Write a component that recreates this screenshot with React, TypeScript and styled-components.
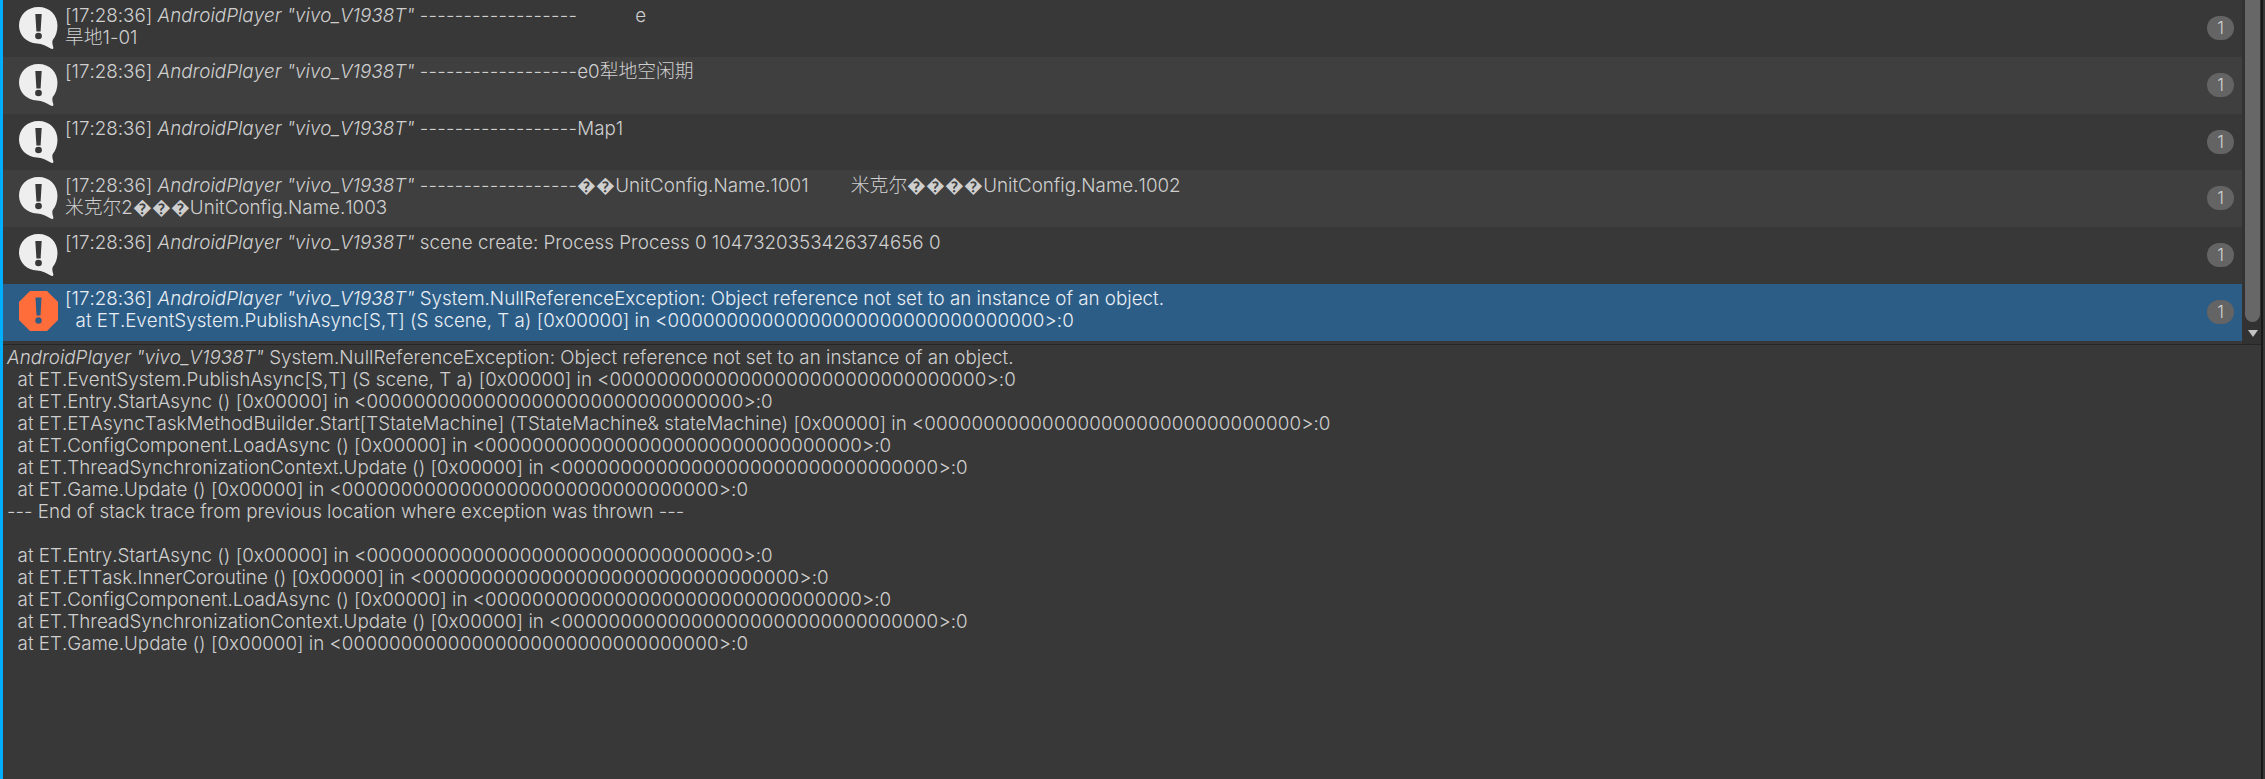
import React from 'react';
import styled, { createGlobalStyle } from 'styled-components';

const GlobalStyle = createGlobalStyle`
  html, body {
    margin: 0;
    padding: 0;
    height: 100%;
    background: #383838;
    overflow: hidden;
  }
`;

const Window = styled.div`
  width: 2265px;
  height: 779px;
  display: flex;
  background: #383838;
  color: #cfcfcf;
  font-family: Inter, "Noto Sans CJK SC", sans-serif;
  font-size: 18.8px;
  font-weight: 300;
  font-kerning: none;
  font-feature-settings: "kern" 0, "calt" 0;
  line-height: 22px;
`;

const FocusStrip = styled.div`
  width: 3px;
  flex: none;
  background: #00aeff;
`;

const Main = styled.div`
  flex: 1;
  min-width: 0;
  display: flex;
  flex-direction: column;
`;

const ListArea = styled.div`
  height: 344px;
  flex: none;
  display: flex;
  background: #383838;
  border-bottom: 1px solid #262626;
`;

const List = styled.div`
  flex: 1;
  min-width: 0;
`;

const Row = styled.div<{ $tone: 'odd' | 'even' | 'selected' }>`
  height: 56.8px;
  display: flex;
  align-items: flex-start;
  padding-left: 16px;
  padding-right: 8px;
  box-sizing: border-box;
  background: ${(p) =>
    p.$tone === 'selected' ? '#2c5d87' : p.$tone === 'even' ? '#3f3f3f' : '#383838'};
  color: ${(p) => (p.$tone === 'selected' ? '#e8eef4' : '#cfcfcf')};
`;

const IconSlot = styled.div`
  width: 46px;
  flex: none;
  padding-top: 7px;
`;

const Message = styled.div`
  flex: 1;
  min-width: 0;
  padding-top: 4.5px;
  white-space: pre;
`;

const Device = styled.em`
  font-style: italic;
`;

// the dashes and the zero runs sit a little wider than the rest of the text
const Spaced = styled.span<{ $gap: number }>`
  letter-spacing: ${(p) => p.$gap}px;
`;

const CountBadge = styled.div`
  width: 27px;
  height: 24px;
  margin-top: 16px;
  border-radius: 12px;
  background: #646464;
  color: #d2d2d2;
  font-size: 17px;
  line-height: 24px;
  text-align: center;
  flex: none;
`;

const Scrollbar = styled.div`
  width: 19px;
  flex: none;
  display: flex;
  flex-direction: column;
  align-items: center;
  padding-left: 3px;
  padding-right: 1px;
  box-sizing: border-box;
  background: #323232;
`;

const Thumb = styled.div`
  width: 15px;
  height: 322px;
  flex: none;
  background: #676767;
  border-radius: 0 0 8px 8px;
`;

const DownArrow = styled.div`
  margin-top: 8px;
  width: 0;
  height: 0;
  border-left: 5px solid transparent;
  border-right: 5px solid transparent;
  border-top: 7px solid #c4c4c4;
`;

const Details = styled.div`
  flex: 1;
  padding: 2px 0 0 4px;
  white-space: pre;
`;

const EdgeStrip = styled.div`
  width: 2px;
  flex: none;
  margin-right: 2px;
  background: #191919;
`;

const WarningIcon = () => (
  <svg width="39" height="42" viewBox="0 0 37 42" preserveAspectRatio="none" style={{ display: 'block' }}>
    <path
      d="M18.500 0C8 0 0 8 0 18.500 0 28 7 36 17 36.500c5 .3 8 2 13 5 1.500.8 3 .5 2.500-1.500-.7-2.500-1.300-4.500-.5-7 3-3.500 4.500-9 4.500-14.500C36.500 8 29 0 18.500 0z"
      fill="#eeeeee"
    />
    <path d="M15.500 7h6l-1 17.500h-4z" fill="#383838" />
    <circle cx="18.500" cy="29" r="3.200" fill="#383838" />
  </svg>
);

const ErrorIcon = () => (
  <svg width="39" height="40" viewBox="0 0 39 40" style={{ display: 'block' }}>
    <path d="M11 0h17l11 11v18L28 40H11L0 29V11z" fill="#fe6d3a" />
    <path d="M16.500 6.500h6l-1 18h-4z" fill="#2c5d87" />
    <circle cx="19.500" cy="29.500" r="3.200" fill="#2c5d87" />
  </svg>
);

const prefix = '[17:28:36] ';
const device = 'AndroidPlayer "vivo_V1938T"';
const dashes = '------------------';
const zeros = '00000000000000000000000000000000';

const rows = [
  { text: ` ${dashes}           e\n旱地1-01` },
  { text: ` ${dashes}e0犁地空闲期` },
  { text: ` ${dashes}Map1` },
  {
    text: ` ${dashes}��UnitConfig.Name.1001        米克尔����UnitConfig.Name.1002\n米克尔2���UnitConfig.Name.1003`,
  },
  { text: ' scene create: Process Process 0 1047320353426374656 0' },
  {
    text: ` System.NullReferenceException: Object reference not set to an instance of an object.\n  at ET.EventSystem.PublishAsync[S,T] (S scene, T a) [0x00000] in <${zeros}>:0`,
    error: true,
  },
];

const detail = ` System.NullReferenceException: Object reference not set to an instance of an object.
  at ET.EventSystem.PublishAsync[S,T] (S scene, T a) [0x00000] in <${zeros}>:0
  at ET.Entry.StartAsync () [0x00000] in <${zeros}>:0
  at ET.ETAsyncTaskMethodBuilder.Start[TStateMachine] (TStateMachine& stateMachine) [0x00000] in <${zeros}>:0
  at ET.ConfigComponent.LoadAsync () [0x00000] in <${zeros}>:0
  at ET.ThreadSynchronizationContext.Update () [0x00000] in <${zeros}>:0
  at ET.Game.Update () [0x00000] in <${zeros}>:0
--- End of stack trace from previous location where exception was thrown ---

  at ET.Entry.StartAsync () [0x00000] in <${zeros}>:0
  at ET.ETTask.InnerCoroutine () [0x00000] in <${zeros}>:0
  at ET.ConfigComponent.LoadAsync () [0x00000] in <${zeros}>:0
  at ET.ThreadSynchronizationContext.Update () [0x00000] in <${zeros}>:0
  at ET.Game.Update () [0x00000] in <${zeros}>:0`;

const toneFor = (i: number, error?: boolean) =>
  error ? 'selected' : i % 2 === 1 ? 'even' : 'odd';

const renderText = (text: string) =>
  text.split(/(-{18}|0{32})/).map((part, i) => {
    if (part === dashes) return <Spaced key={i} $gap={0.25}>{part}</Spaced>;
    if (part === zeros) return <Spaced key={i} $gap={0.18}>{part}</Spaced>;
    return part;
  });

export default function App() {
  return (
    <Window>
      <GlobalStyle />
      <FocusStrip />
      <Main>
        <ListArea>
          <List>
            {rows.map((row, i) => (
              <Row key={i} $tone={toneFor(i, row.error)}>
                <IconSlot>{row.error ? <ErrorIcon /> : <WarningIcon />}</IconSlot>
                <Message>
                  {prefix}
                  <Device>{device}</Device>
                  {renderText(row.text)}
                </Message>
                <CountBadge>1</CountBadge>
              </Row>
            ))}
          </List>
          <Scrollbar>
            <Thumb />
            <DownArrow />
          </Scrollbar>
        </ListArea>
        <Details>
          <Device>{device}</Device>
          {renderText(detail)}
        </Details>
      </Main>
      <EdgeStrip />
    </Window>
  );
}
